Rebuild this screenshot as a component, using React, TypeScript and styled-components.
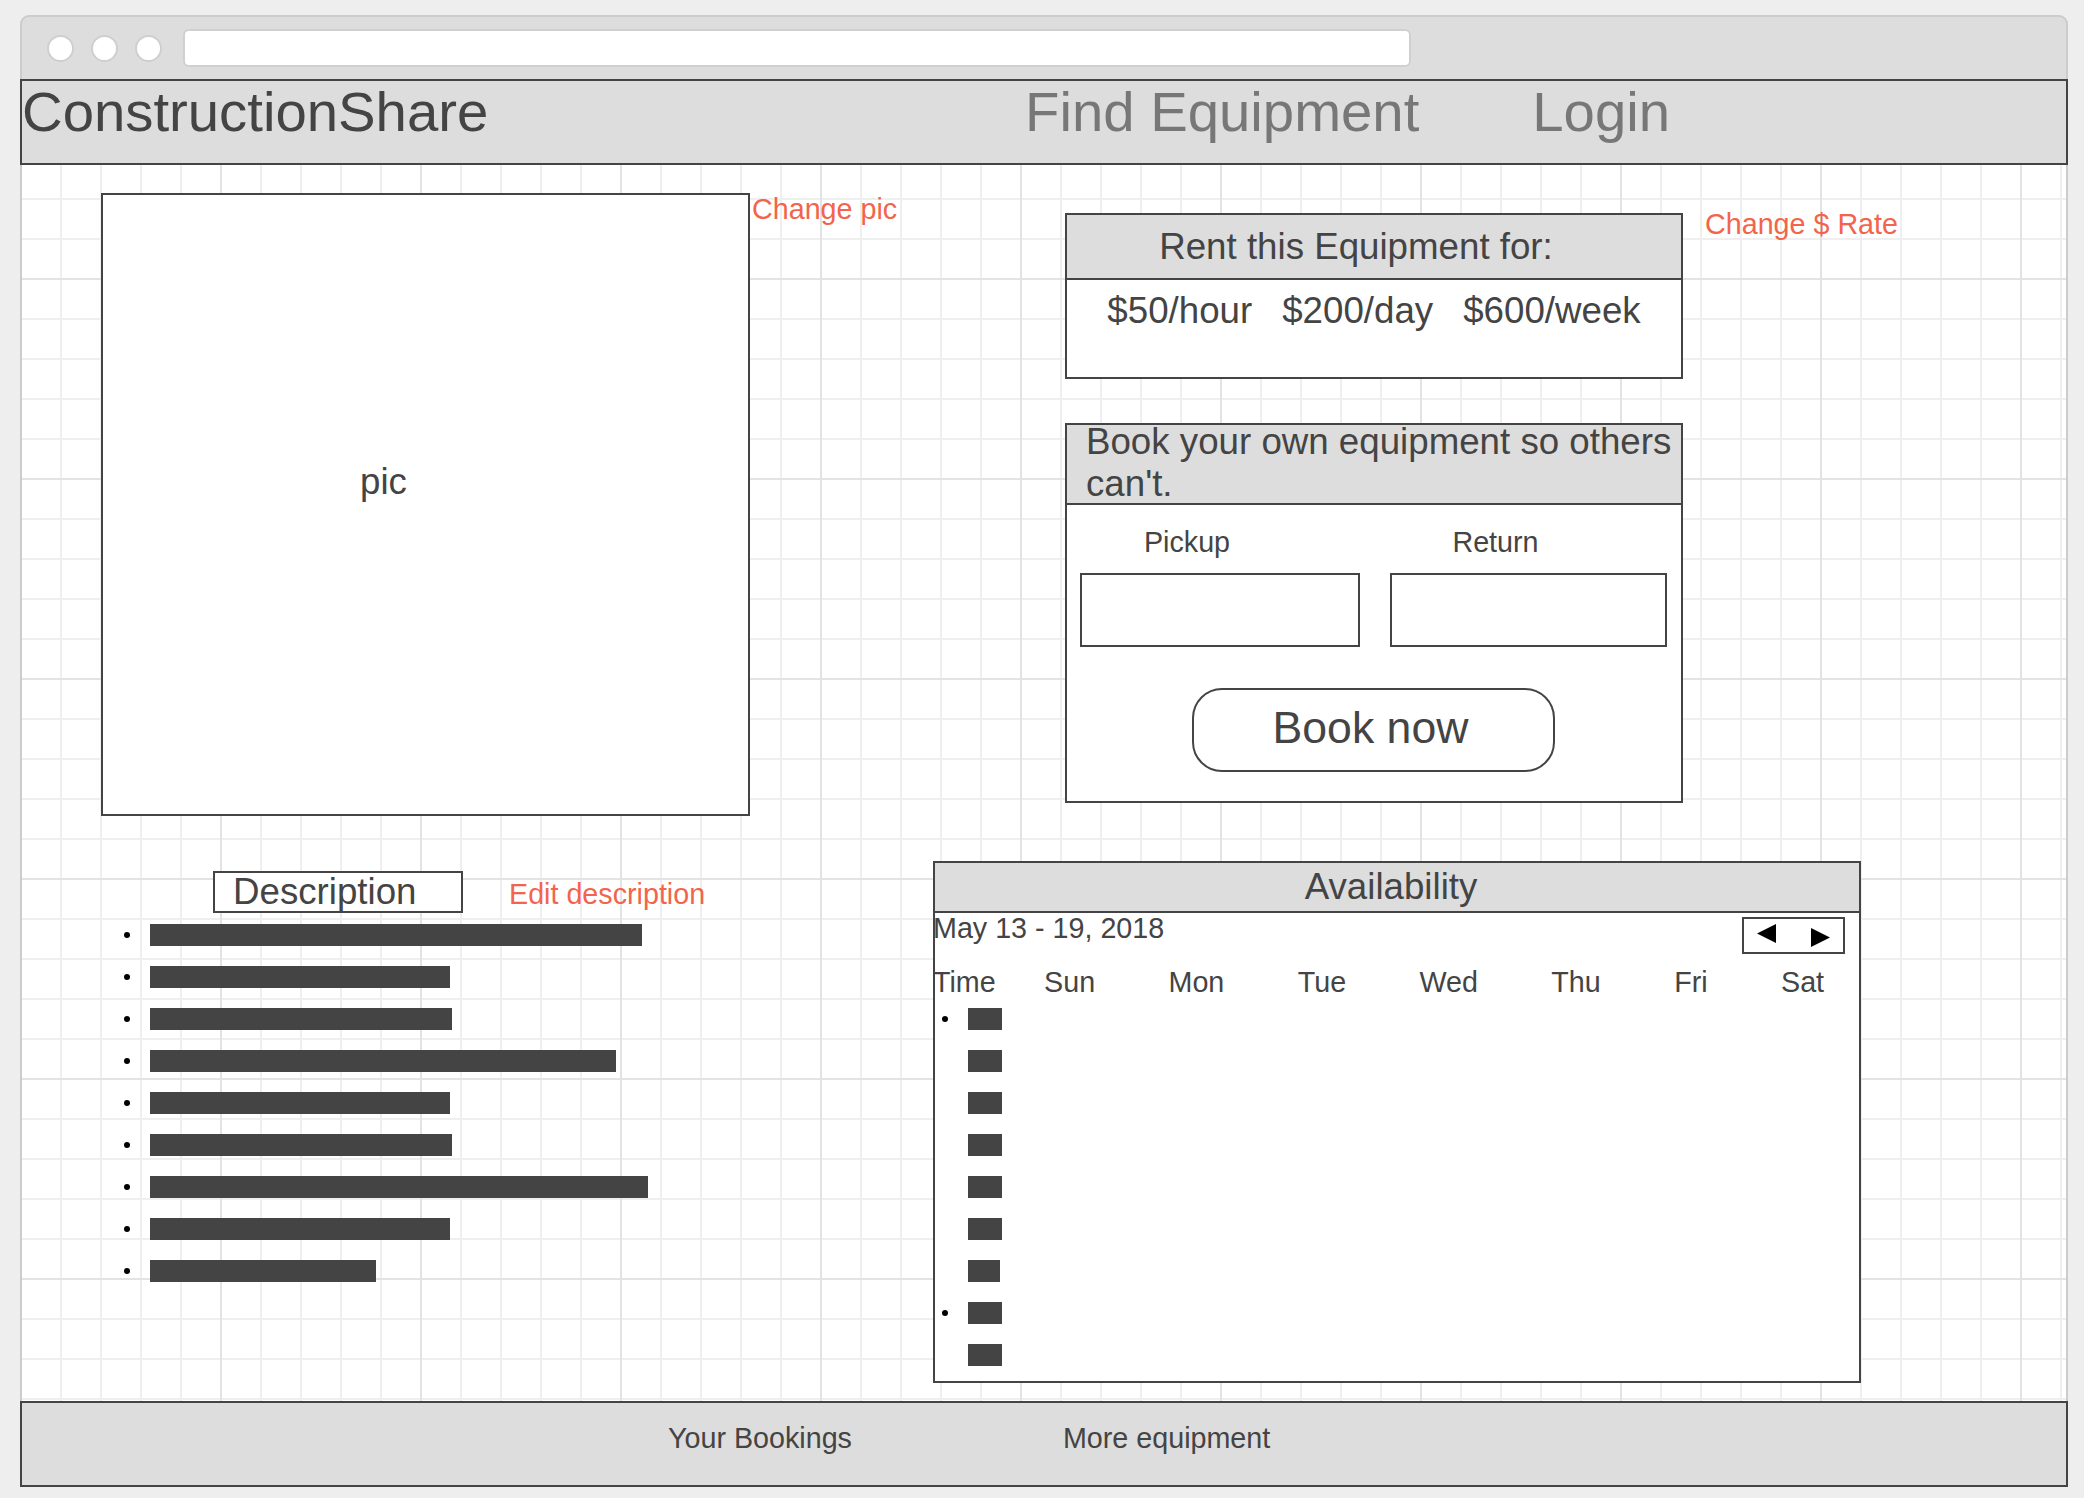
import React from "react";
import styled, { createGlobalStyle } from "styled-components";

const GlobalStyle = createGlobalStyle`
  html, body { margin: 0; padding: 0; background: #eeeeee; }
  body { font-family: "Liberation Sans", Arial, sans-serif; color: #444444; }
  * { box-sizing: border-box; }
`;

const CORAL = "#f2654c";
const DARK = "#444444";
const BIG = "56.3px";
const MID = "36.7px";
const SMALL = "28.7px";

const Page = styled.div`
  width: 2084px;
  height: 1498px;
  padding: 15px 0 0 20px;
  background: #eeeeee;
  overflow: hidden;
`;

const Window = styled.div`
  width: 2048px;
  display: flex;
  flex-direction: column;
`;

const Chrome = styled.div`
  height: 64px;
  background: #dddddd;
  border: 2px solid #cccccc;
  border-bottom: none;
  border-radius: 9px 9px 0 0;
  display: flex;
  align-items: center;
  padding-left: 25px;
`;

const Dot = styled.span`
  width: 27px;
  height: 27px;
  border-radius: 50%;
  background: #ffffff;
  border: 2px solid #cfcfcf;
  margin-right: 17px;
  &:nth-of-type(3) { margin-right: 21px; }
`;

const AddressBar = styled.div`
  width: 1228px;
  height: 38px;
  background: #ffffff;
  border: 2px solid #d0d0d0;
  border-radius: 6px;
`;

const Header = styled.header`
  height: 86px;
  background: #dddddd;
  border: 2px solid ${DARK};
  display: flex;
  align-items: flex-start;
`;

const Brand = styled.div`
  flex: 0 0 1003px;
  font-size: ${BIG};
  line-height: 62px;
  color: ${DARK};
`;

const Nav = styled.nav`
  display: flex;
  gap: 113px;
  font-size: ${BIG};
  line-height: 62px;
  color: #777777;
`;

const Content = styled.main`
  height: 1236px;
  border-left: 2px solid #cccccc;
  border-right: 2px solid #cccccc;
  background-color: #ffffff;
  background-image:
    linear-gradient(to right, #e3e3e3 2px, transparent 2px),
    linear-gradient(to bottom, #e3e3e3 2px, transparent 2px),
    linear-gradient(to right, #efefef 2px, transparent 2px),
    linear-gradient(to bottom, #efefef 2px, transparent 2px);
  background-size: 200px 200px, 200px 200px, 40px 40px, 40px 40px;
  background-position: 198px 0, 0 113px, 38px 0, 0 33px;
  padding: 28px 0 0 79px;
  display: flex;
  flex-direction: column;
`;

const TopRow = styled.section`
  display: grid;
  grid-template-columns: 964px 1fr;
  height: 623px;
`;

const Group = styled.div`
  display: flex;
  align-items: flex-start;
`;

const PicBox = styled.div`
  width: 649px;
  height: 623px;
  border: 2px solid ${DARK};
  background: #ffffff;
  padding: 267px 0 0 257px;
  font-size: ${MID};
  line-height: 40px;
  color: ${DARK};
`;

const EditLink = styled.span<{ $ml: number; $mt: number }>`
  font-size: ${SMALL};
  line-height: 32px;
  color: ${CORAL};
  margin-left: ${(p) => p.$ml}px;
  margin-top: ${(p) => p.$mt}px;
  white-space: nowrap;
`;

const RightStack = styled.div`
  padding-top: 20px;
  display: flex;
  flex-direction: column;
  gap: 44px;
`;

const Panel = styled.div<{ $w: number; $h: number }>`
  width: ${(p) => p.$w}px;
  height: ${(p) => p.$h}px;
  border: 2px solid ${DARK};
  background: #ffffff;
  display: flex;
  flex-direction: column;
`;

const RentHeader = styled.div`
  height: 65px;
  background: #dddddd;
  border-bottom: 2px solid ${DARK};
  font-size: ${MID};
  line-height: 63px;
  text-align: center;
  padding-right: 36px;
`;

const Prices = styled.div`
  padding-top: 11px;
  display: flex;
  justify-content: center;
  gap: 30px;
  font-size: ${MID};
  line-height: 40px;
`;

const BookHeader = styled.div`
  height: 80px;
  flex: 0 0 80px;
  background: #dddddd;
  border-bottom: 2px solid ${DARK};
  padding-left: 19px;
  font-size: ${MID};
  line-height: 42px;
`;

const BookHeaderText = styled.div`
  margin-top: -4px;
`;

const BookBody = styled.div`
  padding: 21px 14px 0 13px;
  display: flex;
  flex-direction: column;
`;

const FieldGrid = styled.div`
  display: grid;
  grid-template-columns: 280px 277px;
  column-gap: 30px;
  row-gap: 15px;
`;

const FieldLabel = styled.div`
  font-size: ${SMALL};
  line-height: 32px;
  text-align: center;
  padding-right: 66px;
`;

const FieldBox = styled.div`
  height: 74px;
  border: 2px solid ${DARK};
  background: #ffffff;
`;

const BookButton = styled.button`
  margin: 41px auto 0;
  width: 363px;
  height: 84px;
  border: 2px solid ${DARK};
  border-radius: 30px;
  background: #ffffff;
  font-family: "Liberation Sans", Arial, sans-serif;
  font-size: 44.6px;
  color: ${DARK};
  display: flex;
  align-items: center;
  justify-content: center;
  padding: 0 6px 4px 0;
  cursor: pointer;
`;

const BottomRow = styled.section`
  margin-top: 45px;
  display: grid;
  grid-template-columns: 832px 1fr;
`;

const DescGroup = styled.div`
  padding-top: 10px;
  display: flex;
  flex-direction: column;
`;

const DescHeaderRow = styled.div`
  display: flex;
  align-items: flex-start;
  padding-left: 112px;
`;

const DescBox = styled.div`
  width: 250px;
  height: 42px;
  border: 2px solid ${DARK};
  background: #ffffff;
  padding-left: 18px;
  font-size: ${MID};
  line-height: 38px;
`;

const BulletList = styled.ul<{ $mt: number }>`
  list-style: none;
  margin: ${(p) => p.$mt}px 0 0 0;
  padding: 0;
  display: flex;
  flex-direction: column;
  gap: 20px;
`;

const BulletItem = styled.li`
  display: flex;
  align-items: center;
  height: 22px;
`;

const Bullet = styled.span<{ $ml: number; $hidden?: boolean }>`
  width: 6px;
  height: 6px;
  border-radius: 50%;
  background: #000000;
  margin-left: ${(p) => p.$ml}px;
  visibility: ${(p) => (p.$hidden ? "hidden" : "visible")};
`;

const Bar = styled.span<{ $w: number }>`
  width: ${(p) => p.$w}px;
  height: 22px;
  margin-left: 20px;
  background: ${DARK};
`;

const AvailHeader = styled.div`
  height: 50px;
  flex: 0 0 50px;
  background: #dddddd;
  border-bottom: 2px solid ${DARK};
  font-size: ${MID};
  line-height: 48px;
  text-align: center;
  padding-right: 12px;
`;

const TopLine = styled.div`
  height: 41px;
  display: flex;
  align-items: flex-start;
`;

const DateRange = styled.div`
  font-size: ${SMALL};
  line-height: 32px;
  margin: -1px 0 0 -2px;
`;

const NavBox = styled.div`
  margin: 4px 14px 0 auto;
  width: 103px;
  height: 37px;
  border: 2px solid ${DARK};
  background: #ffffff;
  display: flex;
  align-items: flex-start;
  padding-left: 13px;
`;

const Arrow = styled.svg<{ $mt: number; $ml: number }>`
  width: 19px;
  height: 19px;
  margin-top: ${(p) => p.$mt}px;
  margin-left: ${(p) => p.$ml}px;
  flex: 0 0 auto;
`;

const DayRow = styled.div`
  margin: 12px 0 0 -2px;
  display: flex;
  gap: 73.4px;
  font-size: ${SMALL};
  line-height: 32px;
`;

const TimeLabel = styled.span`
  margin-right: -25px;
`;

const Footer = styled.footer`
  height: 86px;
  background: #dddddd;
  border: 2px solid ${DARK};
  display: flex;
  align-items: flex-start;
  gap: 211px;
  padding: 19px 0 0 646px;
  font-size: ${SMALL};
  line-height: 32px;
`;

const descBars = [492, 300, 302, 466, 300, 302, 498, 300, 226];
const slots = [
  { w: 34, bullet: true },
  { w: 34, bullet: false },
  { w: 34, bullet: false },
  { w: 34, bullet: false },
  { w: 34, bullet: false },
  { w: 34, bullet: false },
  { w: 32, bullet: false },
  { w: 34, bullet: true },
  { w: 34, bullet: false },
];
const days = ["Sun", "Mon", "Tue", "Wed", "Thu", "Fri", "Sat"];

export default function App() {
  return (
    <>
      <GlobalStyle />
      <Page>
        <Window>
          <Chrome>
            <Dot />
            <Dot />
            <Dot />
            <AddressBar />
          </Chrome>
          <Header>
            <Brand>ConstructionShare</Brand>
            <Nav>
              <span>Find Equipment</span>
              <span>Login</span>
            </Nav>
          </Header>
          <Content>
            <TopRow>
              <Group>
                <PicBox>pic</PicBox>
                <EditLink $ml={2} $mt={0}>Change pic</EditLink>
              </Group>
              <RightStack>
                <Group>
                  <Panel $w={618} $h={166}>
                    <RentHeader>Rent this Equipment for:</RentHeader>
                    <Prices>
                      <span>$50/hour</span>
                      <span>$200/day</span>
                      <span>$600/week</span>
                    </Prices>
                  </Panel>
                  <EditLink $ml={22} $mt={-5}>Change $ Rate</EditLink>
                </Group>
                <Panel $w={618} $h={380}>
                  <BookHeader>
                    <BookHeaderText>Book your own equipment so others can't.</BookHeaderText>
                  </BookHeader>
                  <BookBody>
                    <FieldGrid>
                      <FieldLabel>Pickup</FieldLabel>
                      <FieldLabel>Return</FieldLabel>
                      <FieldBox />
                      <FieldBox />
                    </FieldGrid>
                    <BookButton type="button">Book now</BookButton>
                  </BookBody>
                </Panel>
              </RightStack>
            </TopRow>
            <BottomRow>
              <DescGroup>
                <DescHeaderRow>
                  <DescBox>Description</DescBox>
                  <EditLink $ml={46} $mt={7}>Edit description</EditLink>
                </DescHeaderRow>
                <BulletList $mt={11}>
                  {descBars.map((w, i) => (
                    <BulletItem key={i}>
                      <Bullet $ml={23} />
                      <Bar $w={w} />
                    </BulletItem>
                  ))}
                </BulletList>
              </DescGroup>
              <Panel $w={928} $h={522}>
                <AvailHeader>Availability</AvailHeader>
                <TopLine>
                  <DateRange>May 13 - 19, 2018</DateRange>
                  <NavBox>
                    <Arrow $mt={5} $ml={0} viewBox="0 0 19 19">
                      <polygon points="19,0 19,19 0,9.5" fill="#000" />
                    </Arrow>
                    <Arrow $mt={9} $ml={35} viewBox="0 0 19 19">
                      <polygon points="0,0 0,19 19,9.5" fill="#000" />
                    </Arrow>
                  </NavBox>
                </TopLine>
                <DayRow>
                  <TimeLabel>Time</TimeLabel>
                  {days.map((d) => (
                    <span key={d}>{d}</span>
                  ))}
                </DayRow>
                <BulletList $mt={10}>
                  {slots.map((s, i) => (
                    <BulletItem key={i}>
                      <Bullet $ml={7} $hidden={!s.bullet} />
                      <Bar $w={s.w} />
                    </BulletItem>
                  ))}
                </BulletList>
              </Panel>
            </BottomRow>
          </Content>
          <Footer>
            <span>Your Bookings</span>
            <span>More equipment</span>
          </Footer>
        </Window>
      </Page>
    </>
  );
}
